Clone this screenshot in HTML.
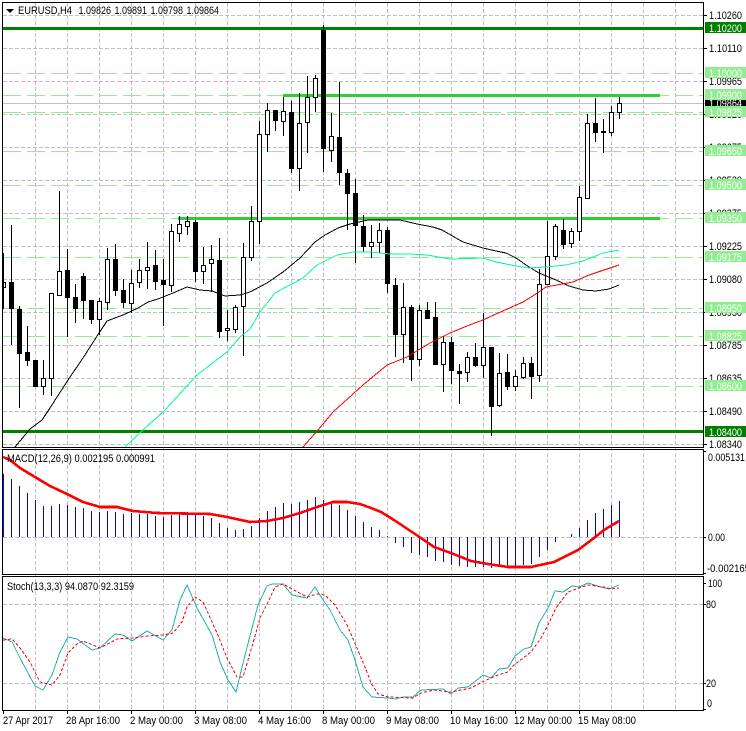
<!DOCTYPE html>
<html><head><meta charset="utf-8"><title>EURUSD,H4</title>
<style>
html,body{margin:0;padding:0;background:#fff;width:746px;height:731px;overflow:hidden}
svg{display:block;font-family:"Liberation Sans",sans-serif;font-size:11px}
.c{shape-rendering:crispEdges}
text{fill:#000}
.w text,text.w{fill:#fff}
</style></head><body>
<svg width="746" height="731" viewBox="0 0 746 731" xmlns="http://www.w3.org/2000/svg">
<rect width="746" height="731" fill="#fff"/>
<g class="c" fill="none">
<path stroke="#c0c0c0" stroke-dasharray="4 2" d="M35.5 3V710M67.5 3V710M99.5 3V710M131.5 3V710M163.5 3V710M195.5 3V710M227.5 3V710M259.5 3V710M291.5 3V710M323.5 3V710M355.5 3V710M387.5 3V710M419.5 3V710M451.5 3V710M483.5 3V710M515.5 3V710M547.5 3V710M579.5 3V710M611.5 3V710M643.5 3V710M675.5 3V710"/>
<path stroke="#c0c0c0" stroke-dasharray="4 2" d="M3 15.5H703M3 48.5H703M3 81.5H703M3 114.5H703M3 147.5H703M3 180.5H703M3 213.5H703M3 246.5H703M3 279.5H703M3 312.5H703M3 345.5H703M3 378.5H703M3 411.5H703M3 444.5H703M3 537.5H703M3 604.5H703M3 683.5H703"/>
<path stroke="#90ee90" stroke-dasharray="18 6" d="M3 73.5H703M3 95.5H703M3 112.5H703M3 151.5H703M3 185.5H703M3 218.5H703M3 257.5H703M3 308.5H703M3 336.5H703M3 386.5H703"/>
<path stroke="#c0c0c0" d="M3 103.5H705"/>
<rect x="3" y="27" width="700" height="3" fill="#007f00"/>
<rect x="3" y="430" width="700" height="3" fill="#007f00"/>
<rect x="283" y="94" width="377" height="3" fill="#32cd32"/>
<rect x="178" y="217" width="482" height="3" fill="#32cd32"/>
</g>
<!-- candles -->
<g class="c">
<path fill="none" stroke="#000" d="M3.5 253V309M11.5 225V345M19.5 306V408M27.5 326V366M35.5 360V387M43.5 360V395M51.5 293V396M59.5 191V295M67.5 249V337M75.5 284V323M83.5 273V319M91.5 300V324M99.5 298V335M107.5 248V310M115.5 244V296M123.5 279V308M131.5 270V313M139.5 259V288M147.5 242V289M155.5 250V290M163.5 259V326M171.5 224V292M179.5 216V242M187.5 216V235M195.5 220V282M203.5 247V284M211.5 245V292M219.5 238V338M227.5 310V341M235.5 305V333M243.5 243V356M251.5 206V261M259.5 121V244M267.5 103V152M275.5 110V131M283.5 97V136M291.5 101V173M299.5 93V191M307.5 76V153M315.5 75V112M323.5 25V172M331.5 113V162M339.5 82V185M347.5 169V230M355.5 179V263M363.5 215V252M371.5 225V258M379.5 223V253M387.5 227V293M395.5 278V357M403.5 283V363M411.5 305V381M419.5 305V366M427.5 302V319M435.5 302V365M443.5 336V392M451.5 337V384M459.5 364V404M467.5 352V382M475.5 343V367M483.5 313V378M491.5 347V436M499.5 353V407M507.5 354V390M515.5 370V391M523.5 357V379M531.5 357V399M539.5 269V382M547.5 221V284M555.5 224V260M563.5 219V249M571.5 228V248M579.5 186V241M587.5 114V198M595.5 98V142M603.5 119V153M611.5 106V136M619.5 97V119"/>
<path fill="#000" d="M9 282h5v27h-5zM17 309h5v45h-5zM25 352h5v9h-5zM33 360h5v27h-5zM65 270h5v28h-5zM73 297h5v12h-5zM81 276h5v25h-5zM89 300h5v20h-5zM113 259h5v32h-5zM121 290h5v13h-5zM153 265h5v17h-5zM161 280h5v5h-5zM193 222h5v50h-5zM217 260h5v72h-5zM273 110h5v11h-5zM289 112h5v57h-5zM321 30h5v119h-5zM337 137h5v36h-5zM345 173h5v21h-5zM353 193h5v33h-5zM361 226h5v21h-5zM385 230h5v54h-5zM393 285h5v50h-5zM409 307h5v53h-5zM425 310h5v9h-5zM433 317h5v48h-5zM449 342h5v29h-5zM457 371h5v3h-5zM473 357h5v9h-5zM489 347h5v60h-5zM505 372h5v15h-5zM529 363h5v14h-5zM561 230h5v15h-5zM593 123h5v10h-5zM601 131h5v2h-5z"/>
<path fill="#fff" stroke="#000" d="M3.5 282.5h2v5h-2zM41.5 378.5h4v8h-4zM49.5 293.5h4v85h-4zM57.5 271.5h4v24h-4zM97.5 301.5h4v18h-4zM105.5 259.5h4v43h-4zM129.5 283.5h4v20h-4zM137.5 270.5h4v12h-4zM145.5 267.5h4v3h-4zM169.5 231.5h4v54h-4zM177.5 224.5h4v9h-4zM185.5 221.5h4v5h-4zM201.5 265.5h4v6h-4zM209.5 259.5h4v4h-4zM225.5 328.5h4v2h-4zM233.5 307.5h4v22h-4zM241.5 257.5h4v49h-4zM249.5 221.5h4v36h-4zM257.5 134.5h4v87h-4zM265.5 110.5h4v24h-4zM281.5 111.5h4v10h-4zM297.5 123.5h4v45h-4zM305.5 97.5h4v25h-4zM313.5 78.5h4v19h-4zM329.5 136.5h4v14h-4zM369.5 242.5h4v4h-4zM377.5 230.5h4v12h-4zM401.5 307.5h4v27h-4zM417.5 310.5h4v49h-4zM441.5 342.5h4v22h-4zM465.5 357.5h4v15h-4zM481.5 347.5h4v18h-4zM497.5 373.5h4v32h-4zM513.5 376.5h4v10h-4zM521.5 363.5h4v14h-4zM537.5 284.5h4v91h-4zM545.5 256.5h4v28h-4zM553.5 226.5h4v30h-4zM569.5 231.5h4v12h-4zM577.5 197.5h4v34h-4zM585.5 123.5h4v75h-4zM609.5 112.5h4v20h-4zM617.5 103.5h4v9h-4z"/>
</g>
<!-- moving averages -->
<g class="c" fill="none">
<polyline stroke="#000" points="15,447 30,429 42,420 50,408 68,380 83,358 99,333 107,321 123,315 138,308 148,302 158,299 173,293 187,287 200,290 212,291 225,296 240,295 250,292 267,283 283,272 300,258 315,242 325,235 338,228 350,224 368,220 400,220 417,224 433,227 442,230 463,242 483,248 496,251 506,253 516,258 529,267 539,273 556,280 569,286 583,290 596,291 609,289 619,285"/>
<polyline stroke="#00fa9a" points="125,447 143,430 165,410 197,375 227,352 240,337 250,329 260,312 275,293 303,278 317,265 337,255 353,252 370,252 390,254 410,254 427,255 450,259 483,258 496,262 516,266 529,268 546,267 566,265 583,261 603,253 619,250"/>
<polyline stroke="#f00" points="303,447 318,430 333,412 363,385 387,365 407,357 430,343 450,333 467,326 483,320 496,314 523,302 539,292 546,287 573,282 589,275 619,265"/>
</g>
<!-- MACD -->
<g class="c">
<path fill="none" stroke="#00f" d="M3.5 474V537M11.5 479V537M19.5 486V537M27.5 493V537M35.5 500V537M43.5 506V537M51.5 506V537M59.5 504V537M67.5 505V537M75.5 507V537M83.5 508V537M91.5 511V537M99.5 512V537M107.5 511V537M115.5 512V537M123.5 514V537M131.5 513V537M139.5 514V537M147.5 514V537M155.5 516V537M163.5 517V537M171.5 515V537M179.5 514V537M187.5 512V537M195.5 514V537M203.5 516V537M211.5 518V537M219.5 523V537M227.5 528V537M235.5 530V537M243.5 529V537M251.5 526V537M259.5 518V537M267.5 511V537M275.5 507V537M283.5 503V537M291.5 504V537M299.5 502V537M307.5 500V537M315.5 497V537M323.5 500V537M331.5 503V537M339.5 505V537M347.5 510V537M355.5 516V537M363.5 522V537M371.5 527V537M379.5 530V537M387.5 536V537M395.5 537V543M403.5 537V547M411.5 537V553M419.5 537V555M427.5 537V557M435.5 537V561M443.5 537V562M451.5 537V565M459.5 537V566M467.5 537V567M475.5 537V567M483.5 537V567M491.5 537V568M499.5 537V567M507.5 537V567M515.5 537V567M523.5 537V565M531.5 537V564M539.5 537V557M547.5 537V550M555.5 537V542M571.5 534V537M579.5 528V537M587.5 520V537M595.5 513V537M603.5 509V537M611.5 505V537M619.5 501V537"/>
<polyline fill="none" stroke="#f00" stroke-width="2.6" points="3,457 10,460 20,468 35,477 50,486 67,494 83,502 100,507 117,507 133,511 157,513 210,514 227,517 250,522 267,521 283,518 300,513 317,507 333,502 347,502 360,504 371,508 381,512 394,520 418,536 434,547 451,553 471,561 488,564 508,567 531,567 554,562 578,550 594,538 604,530 619,521"/>
</g>
<!-- Stochastic -->
<g class="c" fill="none">
<polyline stroke="#20b2aa" points="3,638 12,642 20,658 35,686 43,690 52,675 60,652 68,637 77,639 92,650 100,648 115,634 123,635 132,641 147,631 163,640 172,630 180,600 187,585 197,608 212,635 220,662 228,680 236,692 243,663 258,605 267,586 272,584 283,584 292,595 307,598 315,587 323,600 330,610 340,630 348,640 355,660 363,687 372,697 388,698 396,699 403,697 413,697 421,690 443,689 451,694 458,688 468,687 483,675 491,678 499,669 508,668 515,656 524,649 531,647 539,623 548,608 555,591 563,592 572,586 579,587 588,583 601,587 609,589 619,585"/>
<polyline stroke="#f00" stroke-dasharray="3 2" points="3,640 12,639 20,648 30,662 40,682 52,685 60,675 68,653 77,644 83,641 100,648 117,639 132,638 148,636 163,635 173,633 182,622 187,607 195,597 203,602 217,633 227,658 237,677 243,677 253,643 260,618 270,598 275,587 283,584 292,589 307,597 317,594 325,595 335,605 347,625 357,648 367,672 371,683 378,694 388,697 413,698 421,693 434,690 451,692 471,688 484,681 498,675 508,672 514,665 531,652 541,638 548,625 556,608 568,592 579,588 588,585 604,587 611,589 619,588"/>
</g>
<!-- frames -->
<g class="c" fill="none" stroke="#000">
<path d="M2.5 2.5H703.5V447.5H2.5ZM2.5 449.5H703.5V574.5H2.5ZM2.5 576.5H703.5V710.5H2.5Z"/>
<path d="M703 15.5h4M703 48.5h4M703 81.5h4M703 114.5h4M703 147.5h4M703 180.5h4M703 213.5h4M703 246.5h4M703 279.5h4M703 312.5h4M703 345.5h4M703 378.5h4M703 411.5h4M703 444.5h4M703 451.5h3M703 537.5h3M703 573.5h3M703 604.5h3M703 683.5h3M703 583.5h3M703 709.5h3"/>
<path d="M3.5 710v4M67.5 710v4M131.5 710v4M195.5 710v4M259.5 710v4M323.5 710v4M387.5 710v4M451.5 710v4M515.5 710v4M579.5 710v4"/>
</g>
<!-- title -->
<polygon points="6,9 14,9 10,13" fill="#000"/>
<text x="18" y="14" textLength="54" lengthAdjust="spacingAndGlyphs">EURUSD,H4</text>
<text x="78.5" y="14" textLength="32.5" lengthAdjust="spacingAndGlyphs">1.09826</text>
<text x="114.5" y="14" textLength="32.5" lengthAdjust="spacingAndGlyphs">1.09891</text>
<text x="150.5" y="14" textLength="32.5" lengthAdjust="spacingAndGlyphs">1.09798</text>
<text x="186.5" y="14" textLength="32.5" lengthAdjust="spacingAndGlyphs">1.09864</text>
<text x="7" y="462" textLength="148" lengthAdjust="spacingAndGlyphs">MACD(12,26,9) 0.002195 0.000991</text>
<text x="7" y="590" textLength="127" lengthAdjust="spacingAndGlyphs">Stoch(13,3,3) 94.0870 92.3159</text>
<!-- price axis -->
<g>
<text x="709" y="19" textLength="33" lengthAdjust="spacingAndGlyphs">1.10260</text>
<text x="709" y="52" textLength="33" lengthAdjust="spacingAndGlyphs">1.10110</text>
<text x="709" y="85" textLength="33" lengthAdjust="spacingAndGlyphs">1.09965</text>
<text x="709" y="118" textLength="33" lengthAdjust="spacingAndGlyphs">1.09820</text>
<text x="709" y="151" textLength="33" lengthAdjust="spacingAndGlyphs">1.09675</text>
<text x="709" y="184" textLength="33" lengthAdjust="spacingAndGlyphs">1.09530</text>
<text x="709" y="217" textLength="33" lengthAdjust="spacingAndGlyphs">1.09375</text>
<text x="709" y="250" textLength="33" lengthAdjust="spacingAndGlyphs">1.09225</text>
<text x="709" y="283" textLength="33" lengthAdjust="spacingAndGlyphs">1.09080</text>
<text x="709" y="316" textLength="33" lengthAdjust="spacingAndGlyphs">1.08930</text>
<text x="709" y="349" textLength="33" lengthAdjust="spacingAndGlyphs">1.08785</text>
<text x="709" y="382" textLength="33" lengthAdjust="spacingAndGlyphs">1.08635</text>
<text x="709" y="415" textLength="33" lengthAdjust="spacingAndGlyphs">1.08490</text>
<text x="709" y="448" textLength="33" lengthAdjust="spacingAndGlyphs">1.08340</text>
</g>
<g class="c">
<rect x="705" y="22" width="41" height="11" fill="#007f00"/>
<rect x="705" y="67" width="41" height="11" fill="#90ee90"/>
<rect x="705" y="98" width="41" height="11" fill="#000"/>
</g>
<text class="w" x="709" y="107" textLength="33" lengthAdjust="spacingAndGlyphs">1.09864</text>
<g class="c">
<rect x="705" y="89" width="41" height="11" fill="#90ee90"/>
<rect x="705" y="106" width="41" height="11" fill="#90ee90"/>
<rect x="705" y="145" width="41" height="11" fill="#90ee90"/>
<rect x="705" y="179" width="41" height="11" fill="#90ee90"/>
<rect x="705" y="212" width="41" height="11" fill="#90ee90"/>
<rect x="705" y="251" width="41" height="11" fill="#90ee90"/>
<rect x="705" y="302" width="41" height="11" fill="#90ee90"/>
<rect x="705" y="330" width="41" height="11" fill="#90ee90"/>
<rect x="705" y="380" width="41" height="11" fill="#90ee90"/>
<rect x="705" y="426" width="41" height="11" fill="#007f00"/>
</g>
<g class="w">
<text x="709" y="32" textLength="33" lengthAdjust="spacingAndGlyphs">1.10200</text>
<text x="709" y="77" textLength="33" lengthAdjust="spacingAndGlyphs">1.10000</text>
<text x="709" y="99" textLength="33" lengthAdjust="spacingAndGlyphs">1.09900</text>
<text x="709" y="116" textLength="33" lengthAdjust="spacingAndGlyphs">1.09825</text>
<text x="709" y="155" textLength="33" lengthAdjust="spacingAndGlyphs">1.09650</text>
<text x="709" y="189" textLength="33" lengthAdjust="spacingAndGlyphs">1.09500</text>
<text x="709" y="222" textLength="33" lengthAdjust="spacingAndGlyphs">1.09350</text>
<text x="709" y="261" textLength="33" lengthAdjust="spacingAndGlyphs">1.09175</text>
<text x="709" y="312" textLength="33" lengthAdjust="spacingAndGlyphs">1.08950</text>
<text x="709" y="340" textLength="33" lengthAdjust="spacingAndGlyphs">1.08825</text>
<text x="709" y="390" textLength="33" lengthAdjust="spacingAndGlyphs">1.08600</text>
<text x="709" y="436" textLength="33" lengthAdjust="spacingAndGlyphs">1.08400</text>
</g>
<!-- indicator axes -->
<text x="708" y="461" textLength="37" lengthAdjust="spacingAndGlyphs">0.005131</text>
<text x="708" y="541" textLength="17" lengthAdjust="spacingAndGlyphs">0.00</text>
<text x="707" y="572" textLength="43" lengthAdjust="spacingAndGlyphs">-0.002165</text>
<text x="708" y="587" textLength="14" lengthAdjust="spacingAndGlyphs">100</text>
<text x="706" y="608" textLength="10" lengthAdjust="spacingAndGlyphs">80</text>
<text x="706" y="687" textLength="10" lengthAdjust="spacingAndGlyphs">20</text>
<text x="707" y="707" textLength="5" lengthAdjust="spacingAndGlyphs">0</text>
<!-- time axis -->
<text x="3" y="724" textLength="50" lengthAdjust="spacingAndGlyphs">27 Apr 2017</text>
<text x="66" y="724" textLength="54" lengthAdjust="spacingAndGlyphs">28 Apr 16:00</text>
<text x="130" y="724" textLength="53" lengthAdjust="spacingAndGlyphs">2 May 00:00</text>
<text x="194" y="724" textLength="53" lengthAdjust="spacingAndGlyphs">3 May 08:00</text>
<text x="258" y="724" textLength="53" lengthAdjust="spacingAndGlyphs">4 May 16:00</text>
<text x="322" y="724" textLength="53" lengthAdjust="spacingAndGlyphs">8 May 00:00</text>
<text x="386" y="724" textLength="53" lengthAdjust="spacingAndGlyphs">9 May 08:00</text>
<text x="450" y="724" textLength="58" lengthAdjust="spacingAndGlyphs">10 May 16:00</text>
<text x="514" y="724" textLength="58" lengthAdjust="spacingAndGlyphs">12 May 00:00</text>
<text x="578" y="724" textLength="58" lengthAdjust="spacingAndGlyphs">15 May 08:00</text>
</svg>
</body></html>
